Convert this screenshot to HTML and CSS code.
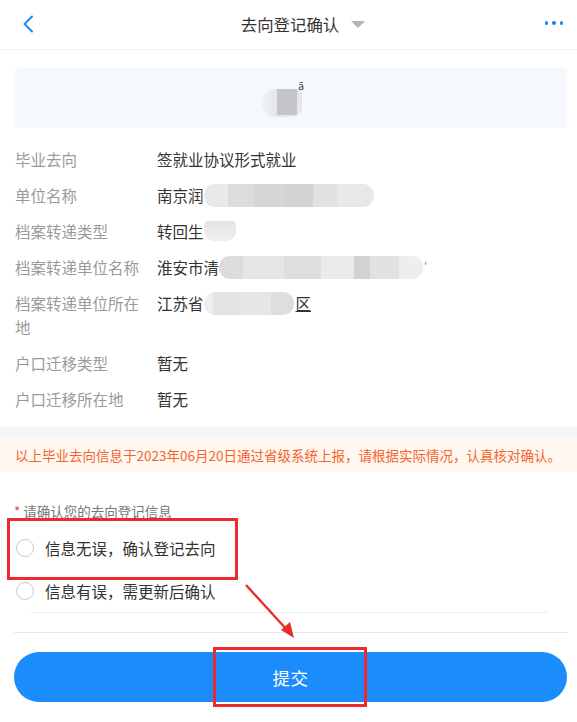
FILE: index.html
```html
<!DOCTYPE html>
<html lang="zh-CN">
<head>
<meta charset="utf-8">
<title>去向登记确认</title>
<link rel="stylesheet" href="styles.css">
</head>
<body>
<div class="page">
  <header class="nav">
    <div class="nav-left">
      <svg class="back" width="12" height="18" viewBox="0 0 12 18"><path d="M10 1.5 L2.5 9 L10 16.5" fill="none" stroke="#1989fa" stroke-width="2" stroke-linecap="round" stroke-linejoin="round"/></svg>
    </div>
    <div class="nav-title">去向登记确认<span class="caret"></span></div>
    <div class="nav-right">
      <span class="dot"></span><span class="dot"></span><span class="dot"></span>
    </div>
  </header>

  <section class="top">
    <div class="hero">
      <span class="hero-blob"><span class="hero-dark"></span><span class="hero-mark">ā</span></span>
    </div>
  </section>

  <section class="info">
    <div class="row"><div class="label">毕业去向</div><div class="value">签就业协议形式就业</div></div>
    <div class="row"><div class="label">单位名称</div><div class="value">南京润<span class="blur b-long"></span></div></div>
    <div class="row"><div class="label">档案转递类型</div><div class="value">转回生<span class="blur b-short"></span></div></div>
    <div class="row"><div class="label">档案转递单位名称</div><div class="value">淮安市清<span class="blur b-wide"></span><span class="tail">'</span></div></div>
    <div class="row"><div class="label">档案转递单位所在地</div><div class="value">江苏省<span class="blur b-mid"></span><span class="under">区</span></div></div>
    <div class="row"><div class="label">户口迁移类型</div><div class="value">暂无</div></div>
    <div class="row"><div class="label">户口迁移所在地</div><div class="value">暂无</div></div>
  </section>

  <div class="band"></div>
  <div class="notice">以上毕业去向信息于2023年06月20日通过省级系统上报，请根据实际情况，认真核对确认。</div>

  <section class="form">
    <div class="form-label"><span class="star">*</span> 请确认您的去向登记信息</div>
    <div class="radios">
      <div class="radio"><span class="circle"></span><span class="radio-text">信息无误，确认登记去向</span></div>
      <div class="radio"><span class="circle"></span><span class="radio-text">信息有误，需更新后确认</span></div>
    </div>
    <div class="divider"></div>
    <button class="submit">提交</button>
  </section>

  <div class="mark mark-1"></div>
  <div class="mark mark-2"></div>
  <svg class="arrow" width="70" height="70" viewBox="0 0 70 70">
    <line x1="4" y1="4" x2="46" y2="50" stroke="#ec2b2b" stroke-width="2.4"/>
    <path d="M52 57 L39 49 L48 41 Z" fill="#ec2b2b"/>
  </svg>
</div>
</body>
</html>
```

FILE: styles.css
```css
* { box-sizing: border-box; }
html, body { margin: 0; padding: 0; background: #fff; }
body {
  font-family: "Noto Sans CJK SC", "Noto Sans", "Liberation Sans", sans-serif;
  color: #333;
}
.page { position: relative; width: 577px; height: 722px; overflow: hidden; }

.nav {
  height: 50px;
  border-bottom: 1px solid #f2f2f2;
  display: grid;
  grid-template-columns: 1fr auto 1fr;
  align-items: center;
}
.nav-left { padding-left: 22px; display: flex; align-items: center; padding-bottom: 2px; }
.nav-title {
  position: relative;
  font-size: 16.4px;
  color: #333;
  padding-left: 3px;
  padding-bottom: 2px;
}
.caret {
  position: absolute;
  left: calc(100% + 12px);
  top: 9px;
  width: 0; height: 0;
  border-left: 7px solid transparent;
  border-right: 7px solid transparent;
  border-top: 7px solid #b3b3b3;
}
.nav-right { display: flex; justify-content: flex-end; gap: 4px; padding-right: 14px; padding-bottom: 3px; }
.dot { width: 3.5px; height: 3.5px; border-radius: 50%; background: #1989fa; }

.top { padding: 18px 10px 0 15px; }
.hero {
  height: 60px;
  background: #f5f8fc;
  border-radius: 4px;
  display: flex;
  align-items: center;
  justify-content: center;
}
.hero-blob {
  position: relative;
  display: block;
  width: 40px; height: 28px;
  margin-left: -18px;
  margin-top: 10px;
  border-radius: 14px 6px 10px 14px;
  background: linear-gradient(90deg, #eef0f2 0, #e6e8eb 30%, #e4e6e9 100%);
  filter: blur(0.6px);
}
.hero-dark {
  position: absolute; left: 15px; top: 0; width: 20px; height: 26px;
  background: #c3c5c8;
}
.hero-mark {
  position: absolute; left: 36px; top: -12px;
  font-size: 11px; color: #444;
}

.info { padding: 13px 10px 10px 15px; }
.row { display: flex; padding: 6px 0; font-size: 15.5px; line-height: 24px; }
.label { width: 142px; flex: none; padding-right: 12px; color: #9a9a9a; }
.value { color: #333; display: flex; align-items: center; align-self: flex-start; }
.blur {
  display: inline-block;
  height: 23px;
  border-radius: 11px;
  filter: blur(0.7px);
}
.b-long {
  width: 170px;
  background: linear-gradient(90deg, #e9e9eb 0 14%, #dcdcde 14% 30%, #d6d6d8 30% 48%, #d2d3d5 48% 64%, #e1e1e3 64% 78%, #e8e8ea 78% 100%);
}
.b-short {
  width: 32px; height: 20px;
  background: linear-gradient(180deg, #e4e4e6 0, #efeff0 100%);
  border-radius: 4px 4px 10px 10px;
}
.b-wide {
  width: 204px;
  background: linear-gradient(90deg, #dcdcde 0 12%, #e6e6e8 12% 32%, #dedee0 32% 50%, #ebebec 50% 66%, #d2d2d4 66% 74%, #e2e2e4 74% 88%, #eeeeef 88% 100%);
}
.tail { font-size: 11px; color: #888; margin-left: 1px; }
.b-mid {
  width: 90px;
  background: linear-gradient(90deg, #eeeeef 0 10%, #e3e3e5 10% 40%, #e6e6e8 40% 75%, #dedee0 75% 100%);
}
.under { margin-left: 2px; text-decoration: underline; }

.band { height: 11px; background: #f5f6f7; }
.notice {
  height: 34px;
  line-height: 34px;
  background: #fff8f0;
  padding-left: 15px;
  font-size: 13.5px;
  color: #f5632e;
  white-space: nowrap;
}

.form { padding: 29px 10px 0 14px; }
.form-label { font-size: 13.5px; line-height: 20px; color: #777; }
.star { color: #ee3b3b; }
.radios { margin-top: 5px; border-bottom: 1px solid #f2f2f2; margin-left: 0; }
.radio { height: 44px; display: flex; align-items: center; padding-left: 2px; }
.radio:last-child { height: 42px; }
.circle {
  width: 18px; height: 18px;
  border: 1px solid #c8c9cc;
  border-radius: 50%;
  margin-right: 11px;
}
.radio-text { font-size: 15.5px; color: #333; }
.radios { position: relative; border-bottom: none; }
.radios::after {
  content: "";
  position: absolute;
  left: 16px; right: 19px; bottom: -1px;
  height: 1px;
  background: #f0f0f0;
}
.divider { height: 1px; background: #e6e6e6; margin-top: 20px; margin-right: -1px; }
.submit {
  display: block;
  margin-top: 19px;
  width: 100%;
  height: 50px;
  border: none;
  border-radius: 25px;
  background: #1a8cfb;
  color: #fff;
  font-family: inherit;
  font-size: 17.5px;
  letter-spacing: 0.5px;
}

.mark {
  position: absolute;
  border: 3px solid #ef2a2e;
}
.mark-1 { left: 7px; top: 518px; width: 231px; height: 62px; }
.mark-2 { left: 213px; top: 647px; width: 154px; height: 60px; }
.arrow { position: absolute; left: 242px; top: 581px; }
```
